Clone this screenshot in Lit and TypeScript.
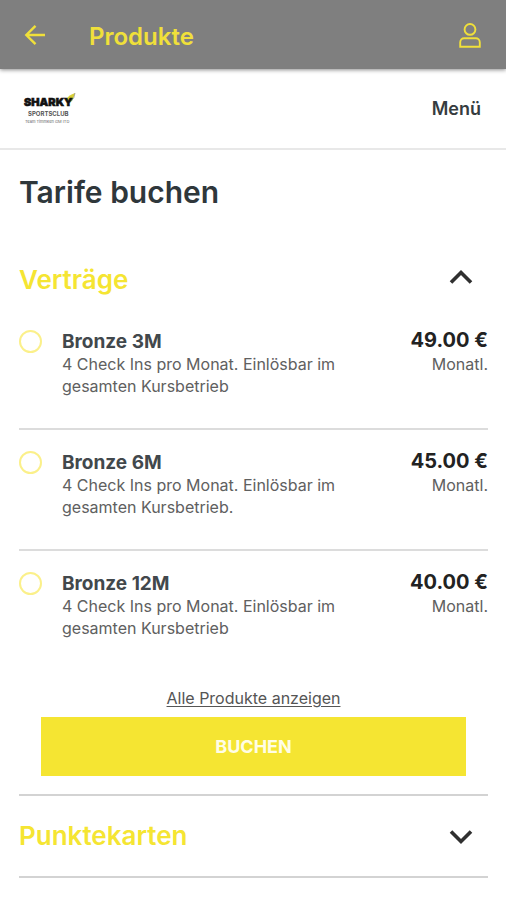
import { LitElement, html, css, svg } from "lit";
import { customElement, property, state } from "lit/decorators.js";

interface Tariff {
  id: string;
  name: string;
  description: string;
  price: string;
}

const TARIFFS: Tariff[] = [
  { id: "bronze-3", name: "Bronze 3M", description: "4 Check Ins pro Monat. Einlösbar im gesamten Kursbetrieb", price: "49.00 €" },
  { id: "bronze-6", name: "Bronze 6M", description: "4 Check Ins pro Monat. Einlösbar im gesamten Kursbetrieb.", price: "45.00 €" },
  { id: "bronze-12", name: "Bronze 12M", description: "4 Check Ins pro Monat. Einlösbar im gesamten Kursbetrieb", price: "40.00 €" },
];

@customElement("app-bar")
class AppBar extends LitElement {
  static styles = css`
    :host { display: block; position: relative; z-index: 1; }
    .bar {
      display: flex;
      align-items: center;
      height: 69px;
      padding: 0 23px;
      background: #7f7f7f;
      color: #f0e03a;
      box-shadow: 0 1px 4px rgba(0, 0, 0, 0.45);
      box-sizing: border-box;
    }
    .icon { display: flex; padding: 0; border: 0; background: none; color: inherit; cursor: pointer; }
    .title {
      flex: 1;
      margin: 0 0 0 42px;
      padding-top: 4px;
      font: 600 24px/32px Inter, "Liberation Sans", sans-serif;
    }
  `;

  render() {
    return html`
      <header class="bar">
        <button class="icon" aria-label="Zurück">
          <svg width="24" height="24" viewBox="0 0 24 24" fill="none" stroke="currentColor" stroke-width="2.4">
            <path d="M22 12H4M12.5 2.8L3.3 12l9.2 9.200" />
          </svg>
        </button>
        <h1 class="title">Produkte</h1>
        <button class="icon" aria-label="Profil">
          <svg width="26" height="28" viewBox="0 0 26 28" fill="none" stroke="currentColor" stroke-width="1.9">
            <circle cx="13" cy="8.4" r="5.4" />
            <path d="M3.200 25.800V21.500C3.200 19 5 17.300 7.200 17.300H18.800C21 17.300 22.800 19 22.800 21.500V25.800z" />
          </svg>
        </button>
      </header>
    `;
  }
}

@customElement("tariff-item")
class TariffItem extends LitElement {
  @property({ attribute: false }) tariff!: Tariff;
  @property({ type: Boolean }) checked = false;

  static styles = css`
    :host { display: block; }
    .row { display: flex; align-items: flex-start; padding: 21px 0 31px; cursor: pointer; }
    .radio {
      appearance: none;
      flex: none;
      width: 23px;
      height: 23px;
      margin: 0 20px 0 0;
      border: 2px solid #fbf08a;
      border-radius: 50%;
      background: #fff;
    }
    .radio:checked { background: #f5e532; box-shadow: inset 0 0 0 4px #fff; }
    .info { flex: 1; max-width: 290px; }
    .name, .desc, .price, .period { display: block; }
    .name { font-size: 19px; line-height: 23px; font-weight: 700; color: #42484c; }
    .desc, .period { font-size: 16px; line-height: 22px; color: #606060; }
    .cost { margin-left: auto; text-align: right; white-space: nowrap; }
    .price { font-size: 20px; line-height: 20px; padding-bottom: 3px; font-weight: 700; color: #222; }
  `;

  private choose() {
    this.dispatchEvent(new CustomEvent("choose", { detail: this.tariff.id }));
  }

  render() {
    const t = this.tariff;
    return html`
      <label class="row">
        <input class="radio" type="radio" name="tariff" .checked=${this.checked} @change=${this.choose} />
        <span class="info">
          <span class="name">${t.name}</span>
          <span class="desc">${t.description}</span>
        </span>
        <span class="cost">
          <span class="price">${t.price}</span>
          <span class="period">Monatl.</span>
        </span>
      </label>
    `;
  }
}

@customElement("app-root")
class AppRoot extends LitElement {
  @state() private contractsOpen = true;
  @state() private selected = "";

  static styles = css`
    :host {
      display: block;
      min-height: 100vh;
      background: #fff;
      font-family: Inter, "Liberation Sans", sans-serif;
      color: #2f373b;
    }
    .brand {
      display: flex;
      align-items: center;
      justify-content: space-between;
      height: 81px;
      padding: 0 25px 0 23px;
      border-bottom: 2px solid #e8e8e8;
      box-sizing: border-box;
    }
    .logo { display: flex; }
    .mark { font: 900 11px Inter, sans-serif; fill: #111; stroke: #111; stroke-width: 0.6px; }
    .club { font: 700 6px Inter, sans-serif; fill: #555; }
    .motto { font: 4px Inter, sans-serif; fill: #666; }
    .menu { padding: 0; border: 0; background: none; font: 600 18px/24px Inter, sans-serif; color: #363c40; cursor: pointer; }
    .content { padding: 0 18px 0 19px; }
    .heading { margin: 0; padding: 24px 0 48px; font-size: 30px; line-height: 36px; font-weight: 600; }
    .section { margin: 0; font-size: 26px; line-height: 44px; font-weight: 600; }
    .toggle {
      display: flex;
      align-items: center;
      justify-content: space-between;
      width: 100%;
      padding: 0 14px 0 0;
      border: 0;
      background: none;
      font: inherit;
      color: #f5e532;
      text-align: left;
      cursor: pointer;
    }
    .chevron { color: #303030; }
    .list { padding-top: 7px; }
    .item + .item { border-top: 2px solid #dcdcdc; }
    .actions { display: flex; flex-direction: column; align-items: center; padding: 18px 22px; }
    .all { font-size: 16px; line-height: 20px; margin-bottom: 9px; color: #555; text-underline-offset: 2px; }
    .book {
      width: 100%;
      height: 59px;
      padding: 0;
      border: 0;
      background: #f5e532;
      color: #fffde6;
      font: 700 18px/24px Inter, sans-serif;
      cursor: pointer;
    }
    .closed { padding: 18px 0; border-top: 2px solid #d3d3d3; border-bottom: 2px solid #d3d3d3; }
  `;

  private chevron(open: boolean) {
    return html`<svg class="chevron" width="26" height="26" viewBox="0 0 26 26" fill="none" stroke="currentColor" stroke-width="3.6">
      ${open ? svg`<path d="M3 15.500L13 5.500L23 15.500" />` : svg`<path d="M3 8.500L13 18.500L23 8.500" />`}
    </svg>`;
  }

  render() {
    return html`
      <app-bar></app-bar>
      <div class="brand">
        <a class="logo" href="#" aria-label="Sharky Sportsclub">
          <svg width="54" height="34" viewBox="0 0 54 34">
            <path d="M43 7Q46 3 52 1Q50.500 7 48 10z" fill="#d8cf35" />
            <path d="M52 1Q51.500 6 48.500 9" fill="none" stroke="#777" stroke-width="0.6" />
            <text class="mark" x="1" y="14">SHARKY</text>
            <text class="club" x="5" y="24">SPORTSCLUB</text>
            <text class="motto" x="2" y="31">Team Timmken GM ITD</text>
          </svg>
        </a>
        <button class="menu">Menü</button>
      </div>
      <main class="content">
        <h2 class="heading">Tarife buchen</h2>
        <h3 class="section">
          <button class="toggle" aria-expanded=${this.contractsOpen} @click=${() => (this.contractsOpen = !this.contractsOpen)}>
            Verträge ${this.chevron(this.contractsOpen)}
          </button>
        </h3>
        <div class="list" ?hidden=${!this.contractsOpen}>
          ${TARIFFS.map(
            (t) => html`<tariff-item
              class="item"
              .tariff=${t}
              .checked=${this.selected === t.id}
              @choose=${(e: CustomEvent<string>) => (this.selected = e.detail)}
            ></tariff-item>`
          )}
          <div class="actions">
            <a class="all" href="#">Alle Produkte anzeigen</a>
            <button class="book">BUCHEN</button>
          </div>
        </div>
        <h3 class="section closed">
          <button class="toggle" aria-expanded="false">Punktekarten ${this.chevron(false)}</button>
        </h3>
      </main>
    `;
  }
}
